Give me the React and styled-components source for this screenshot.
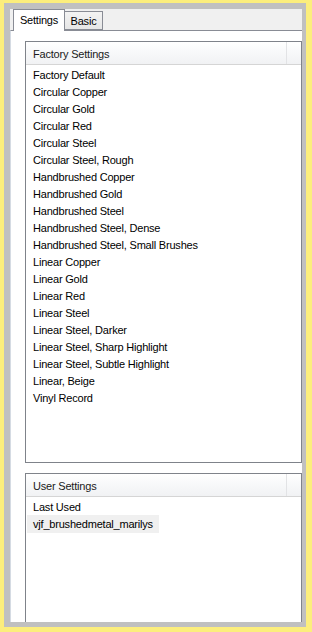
import styled, { createGlobalStyle } from "styled-components";

const GlobalStyle = createGlobalStyle`
  html, body {
    margin: 0;
    padding: 0;
    background: #fcee7c;
  }
  body {
    font-family: "Liberation Sans", Arial, sans-serif;
    font-size: 11px;
    color: #000;
  }
`;

const Outer = styled.div`
  width: 312px;
  height: 632px;
  box-sizing: border-box;
  padding: 3px 6px 5px 4px;
  background: #fcee7c;
`;

const Frame = styled.div`
  height: 100%;
  box-sizing: border-box;
  background: #c0c0c0;
  padding: 6px 4px 5px 6px;
`;

const Window = styled.div`
  height: 100%;
  display: flex;
  flex-direction: column;
  overflow: hidden;
  background: #f0f0f0;
`;

const TabStrip = styled.div`
  height: 21px;
  display: flex;
  align-items: flex-end;
  padding-left: 3px;
  position: relative;
  z-index: 1;
`;

const Tab = styled.div`
  box-sizing: border-box;
  height: ${p => (p.$active ? "22px" : "19px")};
  margin-bottom: ${p => (p.$active ? "-1px" : "0")};
  padding-top: ${p => (p.$active ? "4px" : "3px")};
  text-align: center;
  border: 1px solid #898c95;
  border-bottom: ${p => (p.$active ? "none" : "1px solid #898c95")};
  border-left: ${p => (p.$active ? "1px solid #898c95" : "none")};
  background: ${p =>
    p.$active ? "#fff" : "linear-gradient(#f3f3f3, #e6e6e6)"};
  font-size: 11px;
  letter-spacing: -0.2px;
  width: ${p => p.$w}px;
`;

const Panel = styled.div`
  flex: 1;
  min-height: 0;
  display: flex;
  flex-direction: column;
  gap: 10px;
  background: #fff;
  border-top: 1px solid #898c95;
  border-left: 1px solid #d5dbe3;
  padding: 10px 0 0 14px;
`;

const List = styled.div`
  border: 1px solid #7f838a;
  border-bottom: ${p => (p.$open ? "none" : "1px solid #7f838a")};
  height: ${p => (p.$h ? `${p.$h}px` : "auto")};
  flex: ${p => (p.$h ? "none" : "1")};
  box-sizing: border-box;
  background: #fff;
  overflow: hidden;
`;

const Header = styled.div`
  height: 22px;
  display: flex;
  background: linear-gradient(#ffffff, #f7f8f9 50%, #f1f2f4);
  border-bottom: 1px solid #d5d5d5;
  margin-bottom: 1px;
`;

const HeaderCell = styled.div`
  flex: ${p => (p.$grow ? "1" : "none")};
  width: ${p => (p.$grow ? "auto" : "14px")};
  display: flex;
  align-items: center;
  padding: ${p => (p.$grow ? "2px 0 0 7px" : "0")};
  border-left: ${p => (p.$grow ? "none" : "1px solid #e2e3e5")};
  font-size: 11px;
  letter-spacing: -0.2px;
  color: #1a1a1a;
`;

const Row = styled.div`
  height: 17px;
  line-height: 18px;
  padding: 0 0 0 7px;
  font-size: 11px;
  letter-spacing: -0.2px;
  white-space: nowrap;
`;

const RowText = styled.span`
  display: inline-block;
  margin-left: -6px;
  padding: 0 6px;
  background: ${p => (p.$sel ? "#f0f0f0" : "transparent")};
`;

const factory = [
  "Factory Default",
  "Circular Copper",
  "Circular Gold",
  "Circular Red",
  "Circular Steel",
  "Circular Steel, Rough",
  "Handbrushed Copper",
  "Handbrushed Gold",
  "Handbrushed Steel",
  "Handbrushed Steel, Dense",
  "Handbrushed Steel, Small Brushes",
  "Linear Copper",
  "Linear Gold",
  "Linear Red",
  "Linear Steel",
  "Linear Steel, Darker",
  "Linear Steel, Sharp Highlight",
  "Linear Steel, Subtle Highlight",
  "Linear, Beige",
  "Vinyl Record",
];

const user = ["Last Used", "vjf_brushedmetal_marilys"];

export default function App() {
  return (
    <>
      <GlobalStyle />
      <Outer>
        <Frame>
          <Window>
            <TabStrip>
              <Tab $active $w={52}>Settings</Tab>
              <Tab $w={38}>Basic</Tab>
            </TabStrip>
            <Panel>
              <List $h={422}>
                <Header>
                  <HeaderCell $grow>Factory Settings</HeaderCell>
                  <HeaderCell />
                </Header>
                {factory.map(name => (
                  <Row key={name}>
                    <RowText>{name}</RowText>
                  </Row>
                ))}
              </List>
              <List $open>
                <Header>
                  <HeaderCell $grow>User Settings</HeaderCell>
                  <HeaderCell />
                </Header>
                {user.map((name, i) => (
                  <Row key={name}>
                    <RowText $sel={i === 1}>{name}</RowText>
                  </Row>
                ))}
              </List>
            </Panel>
          </Window>
        </Frame>
      </Outer>
    </>
  );
}
